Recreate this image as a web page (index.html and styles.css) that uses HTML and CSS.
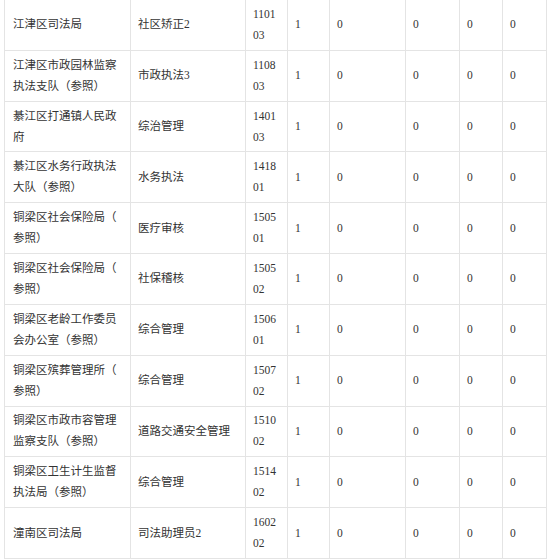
FILE: index.html
```html
<!DOCTYPE html>
<html lang="zh-CN">
<head>
<meta charset="utf-8">
<title>职位表</title>
<link rel="stylesheet" href="styles.css">
</head>
<body>
<div class="table">
  <div class="c c1">江津区司法局</div><div class="c">社区矫正2</div><div class="c num">110103</div><div class="c">1</div><div class="c">0</div><div class="c">0</div><div class="c">0</div><div class="c">0</div>
  <div class="c c1">江津区市政园林监察执法支队（参照）</div><div class="c">市政执法3</div><div class="c num">110803</div><div class="c">1</div><div class="c">0</div><div class="c">0</div><div class="c">0</div><div class="c">0</div>
  <div class="c c1">綦江区打通镇人民政府</div><div class="c">综治管理</div><div class="c num">140103</div><div class="c">1</div><div class="c">0</div><div class="c">0</div><div class="c">0</div><div class="c">0</div>
  <div class="c c1">綦江区水务行政执法大队（参照）</div><div class="c">水务执法</div><div class="c num">141801</div><div class="c">1</div><div class="c">0</div><div class="c">0</div><div class="c">0</div><div class="c">0</div>
  <div class="c c1">铜梁区社会保险局（参照）</div><div class="c">医疗审核</div><div class="c num">150501</div><div class="c">1</div><div class="c">0</div><div class="c">0</div><div class="c">0</div><div class="c">0</div>
  <div class="c c1">铜梁区社会保险局（参照）</div><div class="c">社保稽核</div><div class="c num">150502</div><div class="c">1</div><div class="c">0</div><div class="c">0</div><div class="c">0</div><div class="c">0</div>
  <div class="c c1">铜梁区老龄工作委员会办公室（参照）</div><div class="c">综合管理</div><div class="c num">150601</div><div class="c">1</div><div class="c">0</div><div class="c">0</div><div class="c">0</div><div class="c">0</div>
  <div class="c c1">铜梁区殡葬管理所（参照）</div><div class="c">综合管理</div><div class="c num">150702</div><div class="c">1</div><div class="c">0</div><div class="c">0</div><div class="c">0</div><div class="c">0</div>
  <div class="c c1">铜梁区市政市容管理监察支队（参照）</div><div class="c">道路交通安全管理</div><div class="c num">151002</div><div class="c">1</div><div class="c">0</div><div class="c">0</div><div class="c">0</div><div class="c">0</div>
  <div class="c c1">铜梁区卫生计生监督执法局（参照）</div><div class="c">综合管理</div><div class="c num">151402</div><div class="c">1</div><div class="c">0</div><div class="c">0</div><div class="c">0</div><div class="c">0</div>
  <div class="c c1">潼南区司法局</div><div class="c">司法助理员2</div><div class="c num">160202</div><div class="c">1</div><div class="c">0</div><div class="c">0</div><div class="c">0</div><div class="c">0</div>
</div>
</body>
</html>
```
FILE: styles.css
```css
html, body {
  margin: 0;
  padding: 0;
  background: #ffffff;
}
body {
  font-family: "Liberation Serif", "Noto Sans CJK SC", serif;
  font-size: 11.5px;
  color: #333333;
}
.table {
  display: grid;
  grid-template-columns: 125px 114px 41px 41px 75px 53px 42px 43px;
  grid-auto-rows: 49.82px;
  gap: 1px;
  padding: 1px;
  margin: -1px 0 0 4px;
  width: max-content;
  background: #e4e4e4;
}
.c {
  background: #ffffff;
  display: flex;
  align-items: center;
  padding: 0 7px;
  line-height: 21px;
  line-break: anywhere;
  word-break: break-all;
  min-width: 0;
}
.c1 {
  padding: 0 6px 0 8px;
}
.num {
  padding: 0 7px 0 7px;
}
```
